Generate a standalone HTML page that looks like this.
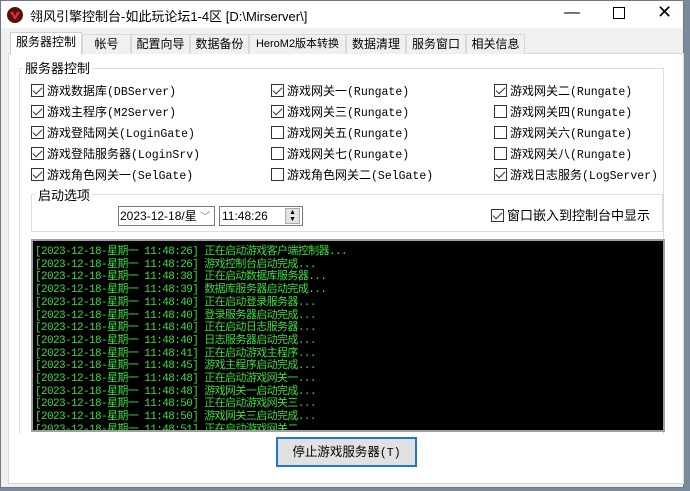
<!DOCTYPE html>
<html><head><meta charset="utf-8"><style>
*{box-sizing:border-box;margin:0;padding:0}
body{width:690px;height:491px;background:#7a8a9a;position:relative;overflow:hidden;font-family:"Liberation Sans","Noto Sans CJK SC",sans-serif;font-size:12px;color:#000}
.win{position:absolute;left:0;top:0;width:684px;height:488px;background:#f0f0f0;border:1px solid #6a7a8a}
.title{position:absolute;left:0;top:0;width:682px;height:27px;background:#fff}
.title .t{position:absolute;left:29px;top:5px;font-size:13px}
.a{position:absolute;white-space:nowrap}
.tab{position:absolute;top:33px;height:20px;border:1px solid #d9d9d9;border-bottom:none;background:#f0f0f0;font-size:12px;line-height:18px;text-align:center}
.panel{position:absolute;left:7px;top:52px;width:676px;height:431px;background:#fff;border:1px solid #d9d9d9}
.gb{position:absolute;border:1px solid #dcdcdc}
.gl{position:absolute;background:#fff;padding:0 2px;font-size:13px}
.cb{position:absolute;font-size:12px;white-space:nowrap;line-height:14px}
.cb i{display:inline-block;width:13px;height:13px;border:1px solid #333;vertical-align:-2px;margin-right:3px;position:relative;background:#fff}
.cb i.c::after{content:"";position:absolute;left:3px;top:0px;width:4px;height:8px;border:solid #333;border-width:0 1.3px 1.3px 0;transform:rotate(45deg)}
.m{font-family:"Liberation Mono",monospace;font-size:11.5px}
.log{position:absolute;left:30px;top:238px;width:634px;height:193px;background:#000;border:2px solid #a0a0a0;overflow:hidden;padding:5px 0 0 2px}
.log div{color:#3ede3e;font-family:"Liberation Mono","Noto Sans CJK SC",monospace;font-size:11px;letter-spacing:-0.6px;line-height:12.7px;white-space:nowrap}
</style></head><body>
<div class="win">
<div class="title">
<svg style="position:absolute;left:6px;top:6px" width="16" height="16"><circle cx="8" cy="8" r="8" fill="#5a1010"/><path d="M3 5 L8 13 L13 5 L10 5 L8 9 L6 5Z" fill="#e03030"/></svg>
<span class="t">翎风引擎控制台-如此玩论坛1-4区 [D:\Mirserver\]</span>
<span class="a" style="left:563px;top:3px;font-size:16px">—</span>
<span class="a" style="left:612px;top:6px;width:12px;height:12px;border:1px solid #000"></span>
<span class="a" style="left:656px;top:1px;font-size:18px">✕</span>
</div>
<div class="panel"></div>
<div class="tab" style="left:9px;top:31px;height:23px;width:72px;background:#fff;border-color:#d0d0d0">服务器控制</div>
<div class="tab" style="left:81px;width:49px">帐号</div>
<div class="tab" style="left:130px;width:59px">配置向导</div>
<div class="tab" style="left:189px;width:59px">数据备份</div>
<div class="tab" style="left:248px;width:97px;font-size:11px">HeroM2版本转换</div>
<div class="tab" style="left:345px;width:60px">数据清理</div>
<div class="tab" style="left:405px;width:60px">服务窗口</div>
<div class="tab" style="left:465px;width:59px">相关信息</div>

<div class="gb" style="left:18px;top:67px;width:645px;height:366px;border-bottom:none"></div>
<div class="gl" style="left:22px;top:57px">服务器控制</div>

<div class="cb" style="left:30px;top:83px"><i class="c"></i>游戏数据库<span class="m">(DBServer)</span></div>
<div class="cb" style="left:30px;top:104px"><i class="c"></i>游戏主程序<span class="m">(M2Server)</span></div>
<div class="cb" style="left:30px;top:125px"><i class="c"></i>游戏登陆网关<span class="m">(LoginGate)</span></div>
<div class="cb" style="left:30px;top:146px"><i class="c"></i>游戏登陆服务器<span class="m">(LoginSrv)</span></div>
<div class="cb" style="left:30px;top:167px"><i class="c"></i>游戏角色网关一<span class="m">(SelGate)</span></div>

<div class="cb" style="left:270px;top:83px"><i class="c"></i>游戏网关一<span class="m">(Rungate)</span></div>
<div class="cb" style="left:270px;top:104px"><i class="c"></i>游戏网关三<span class="m">(Rungate)</span></div>
<div class="cb" style="left:270px;top:125px"><i></i>游戏网关五<span class="m">(Rungate)</span></div>
<div class="cb" style="left:270px;top:146px"><i></i>游戏网关七<span class="m">(Rungate)</span></div>
<div class="cb" style="left:270px;top:167px"><i></i>游戏角色网关二<span class="m">(SelGate)</span></div>

<div class="cb" style="left:493px;top:83px"><i class="c"></i>游戏网关二<span class="m">(Rungate)</span></div>
<div class="cb" style="left:493px;top:104px"><i></i>游戏网关四<span class="m">(Rungate)</span></div>
<div class="cb" style="left:493px;top:125px"><i></i>游戏网关六<span class="m">(Rungate)</span></div>
<div class="cb" style="left:493px;top:146px"><i></i>游戏网关八<span class="m">(Rungate)</span></div>
<div class="cb" style="left:493px;top:167px"><i class="c"></i>游戏日志服务<span class="m">(LogServer)</span></div>

<div class="gb" style="left:30px;top:193px;width:632px;height:38px"></div>
<div class="gl" style="left:35px;top:184px">启动选项</div>
<div class="a" style="left:117px;top:205px;width:97px;height:20px;border:1px solid #7a7a7a;background:#fff;font-size:12px;line-height:18px;padding-left:1px">2023-12-18/星 <span style="color:#777;font-size:10px">﹀</span></div>
<div class="a" style="left:218px;top:205px;width:84px;height:20px;border:1px solid #7a7a7a;background:#fff;font-size:12px;line-height:18px;padding-left:2px">11:48:26</div>
<div class="a" style="left:284px;top:207px;width:15px;height:16px;background:#e3e3e3;border:1px solid #aaa;font-size:7px;line-height:7px;text-align:center">▲<br>▼</div>
<div class="cb" style="left:490px;top:208px;font-size:13px"><i class="c"></i>窗口嵌入到控制台中显示</div>

<div class="log">
<div>[2023-12-18-星期一 11:48:26] 正在启动游戏客户端控制器...</div>
<div>[2023-12-18-星期一 11:48:26] 游戏控制台启动完成...</div>
<div>[2023-12-18-星期一 11:48:38] 正在启动数据库服务器...</div>
<div>[2023-12-18-星期一 11:48:39] 数据库服务器启动完成...</div>
<div>[2023-12-18-星期一 11:48:40] 正在启动登录服务器...</div>
<div>[2023-12-18-星期一 11:48:40] 登录服务器启动完成...</div>
<div>[2023-12-18-星期一 11:48:40] 正在启动日志服务器...</div>
<div>[2023-12-18-星期一 11:48:40] 日志服务器启动完成...</div>
<div>[2023-12-18-星期一 11:48:41] 正在启动游戏主程序...</div>
<div>[2023-12-18-星期一 11:48:45] 游戏主程序启动完成...</div>
<div>[2023-12-18-星期一 11:48:48] 正在启动游戏网关一...</div>
<div>[2023-12-18-星期一 11:48:48] 游戏网关一启动完成...</div>
<div>[2023-12-18-星期一 11:48:50] 正在启动游戏网关三...</div>
<div>[2023-12-18-星期一 11:48:50] 游戏网关三启动完成...</div>
<div>[2023-12-18-星期一 11:48:51] 正在启动游戏网关二...</div>
<div>[2023-12-18-星期一 11:48:51] 游戏网关二启动完成...</div>
</div>
<div class="a" style="left:275px;top:436px;width:141px;height:30px;border:2px solid #1e78d0;background:#e1e1e1;text-align:center;line-height:26px;font-size:12.5px">停止游戏服务器<span class="m">(T)</span></div>
</div>
</body></html>
